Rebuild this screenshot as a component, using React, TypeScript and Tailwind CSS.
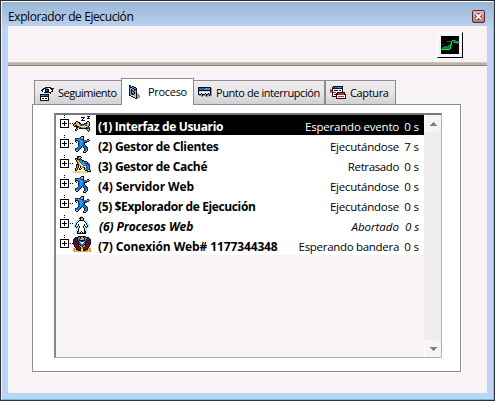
import React from "react";

const palette: Record<string, string> = {
  k: "#111018",
  b: "#0a6cc4",
  l: "#2a9af0",
  n: "#0a3a74",
  s: "#e3a16c",
  y: "#ffdf6b",
  o: "#e8961c",
  w: "#ffffff",
  c: "#a9e7ef",
  r: "#e01832",
  m: "#6b1022",
  g: "#92929b",
  d: "#4a4b55",
  e: "#c4d1e0",
};

function Pixels({ rows, className = "" }: { rows: string[]; className?: string }) {
  return (
    <svg className={`block shrink-0 ${className}`} width={rows[0].length} height={rows.length} shapeRendering="crispEdges" aria-hidden="true">
      {rows.flatMap((row, y) =>
        row.split("").map((p, x) => (p === "." ? null : <rect key={`${x}-${y}`} x={x} y={y} width="1" height="1" fill={palette[p]} />)),
      )}
    </svg>
  );
}

const sleeping = [
  "..............kkk.",
  "........kkkk...k..",
  "..........k...kkk.",
  ".........k........",
  "........kkkk......",
  "...kk.........kk..",
  "..ksskk......kssk.",
  ".kkysskk...kkksyk.",
  "ksooyylbkkkllbyok.",
  "kskkoyybblllbbook.",
  ".kkkkkoyyyyyyyok..",
  "...kkbbkoooookbbk.",
  "...ko.kkkkkkkkkbk.",
  "..kok........kyok.",
  "..kk..........kok.",
  "...............k..",
  "..................",
];
const running = [
  "........kkk.......",
  ".......nssk.......",
  "..nnnnnnssk.......",
  "..nllllbbkk...kk..",
  "..kkkblllbbbbbssk.",
  "..kssnblllbbbbkk..",
  "...k.nblllbkkk....",
  ".....nbllbbk......",
  ".....nbllbbk......",
  ".....nbllbbbk.....",
  ".....nblkbbbbk....",
  "....nblbk.kbbbk...",
  "..nnblbk...kblk...",
  "..nlbbk....nblk...",
  "..kssk.....nblk...",
  "...kk.....kssk....",
  "..........kkk.....",
];
const waiting = [
  "....kkkk..........",
  "....kkssk.........",
  "..kkkssk..........",
  "..kokkkbk.........",
  "...kooblbkk.......",
  "...koyblbbbkkk....",
  "....koyblllbbsk...",
  "....koyyblllbkkk..",
  "...kkkoyyblllbbbk.",
  "...kokooyybbbblbk.",
  "...kok.kooyyybblk.",
  "...kok.kyokk.nblk.",
  "..kok.kyk..kobblk.",
  "..kok.kk...koblbk.",
  "..kk........kkkssk",
  "yyyyyyyyyyyyyykkkk",
  "yyoyyyoyyyoyyyoyyy",
];
const aborted = [
  ".......ccc........",
  "......ckkkc.......",
  ".....ckksskc......",
  "......ckssk.......",
  "....cckkkkkcc.....",
  "...cckwwwwwkcc....",
  "..cckwwwwwwwkcc...",
  "..ckwwwwwwwwwkc...",
  ".cckwkwwwwwkwkcc..",
  ".ckwwkwwwwwkwwkc..",
  ".ckskckwwwkckskc..",
  ".cckcckwwwkcckcc..",
  "...cckwwwwwkcc....",
  "...cckwwwwwkcc....",
  "...cckwwwwwkcc....",
  "...ckkwwkwwkkc....",
  "...cksskckskkc....",
  "....kkkkkkkkk.....",
];
const waitingFlag = [
  ".....kkkkkkkk.....",
  "..kkkblkssklbkkk..",
  ".kmmkllkssskllkmk.",
  "kmmmklkssssklkmmmk",
  "kmkmkbkkkkkkbkmkmk",
  "kmmkmkblkkblkmkmmk",
  "kmmmkkbeewwbkkmmmk",
  "kmkmmkbbewbbkmmkmk",
  "kmmkmkkbbbbkkmkmmk",
  ".kmmmkokbbkokmmmk.",
  ".kmmkmkookookmmmk.",
  "..kmmmmkookmmmmk..",
  "oookmmmkookmmmkooo",
  "yookkkmkyykmkkkooy",
  "ooyookkkyykkkooyoo",
  "yooyooyooyooyooyoo",
];

const watchIcon = [
  ".....kkkkkk...",
  "...kkkggwwkkkk",
  "..kkwkkkkwwkk.",
  ".kkwwkddkwwwk.",
  "..kwwkkkkwwkk.",
  "....kkkkkkk...",
  "..........k...",
  "kkkkkkkkk.....",
  "klllbbbbk.....",
  "kkkkkkkkk.....",
  "kwwwwwwwk.....",
  "kwkkwkkwk.....",
  "kwwwwwwwk.....",
  "kkkkkkkkk.....",
];
const processIcon = [
  "kk...........",
  "kllkk........",
  "kkkllkk......",
  "kgekkllk.....",
  "kgkegkkk.....",
  "kgkkgkgk.....",
  "kgklkggk.....",
  "kgkllkgk.....",
  "kgkklkgkg....",
  "kggkkgekgg...",
  "kkeeegekggg..",
  "..kkeeekggg..",
  "....kkekggg..",
  "......kkg....",
];
const breakIcon = [
  "kkkkkkkkkkkkk.",
  "kbbbbbblllllkg",
  "kbbbbbblllllkg",
  "kkkkkkkkkkkkkg",
  "keeeeeeeeeeekg",
  "kwwwwwwwwwwwkg",
  "keekeeekeekekg",
  "kkkgkkkgkkgkkg",
  ".gggkgggkggkgg",
  "...gg..ggg.g..",
];
const captureIcon = [
  "...kkkkkkkkkk...",
  "..kbbbblllllk...",
  "..kkkkkkkkkkk...",
  "r.kwwwwwwwwwk...",
  "rrkwkkkkwkkwk...",
  "rrkwwwwwwwwwk...",
  "r.krrrwkkkkkkkk.",
  "..kwwwkkrrrrrrk.",
  "..kwkkkkrrrrrrkk",
  "..kwwwkwwwwwwwwk",
  "..kkkkkwrrrrrrwk",
  "......kwwwwwwwwk",
  "......kkkkkkkkkk",
];

function Expander() {
  return (
    <svg width="17" height="20" className="block shrink-0" shapeRendering="crispEdges" aria-hidden="true">
      <path fill="black" d="M8 0h1v1h-1zM8 2h1v1h-1zM14 8h1v1h-1zM16 8h1v1h-1z" />
      <path fill="black" d="M4 4h9v9H4z" />
      <path fill="white" d="M5 5h7v7H5z" />
      <path fill="black" d="M6 8h5v1H6zM8 6h1v5H8z" />
    </svg>
  );
}

interface Process {
  name: string;
  state: string;
  seconds: number;
  icon: string[];
  tracking: string;
  stateTracking: string;
  selected?: boolean;
  italic?: boolean;
}

const processes: Process[] = [
  { name: "(1) Interfaz de Usuario", state: "Esperando evento", seconds: 0, icon: sleeping, tracking: "tracking-[-0.35px]", stateTracking: "tracking-[-0.2px]", selected: true },
  { name: "(2) Gestor de Clientes", state: "Ejecutándose", seconds: 7, icon: running, tracking: "tracking-[-0.3px]", stateTracking: "tracking-[-0.22px]" },
  { name: "(3) Gestor de Caché", state: "Retrasado", seconds: 0, icon: waiting, tracking: "tracking-[-0.3px]", stateTracking: "tracking-[-0.38px]" },
  { name: "(4) Servidor Web", state: "Ejecutándose", seconds: 0, icon: running, tracking: "tracking-[-0.1px]", stateTracking: "tracking-[-0.22px]" },
  { name: "(5) $Explorador de Ejecución", state: "Ejecutándose", seconds: 0, icon: running, tracking: "tracking-[-0.38px]", stateTracking: "tracking-[-0.22px]" },
  { name: "(6) Procesos Web", state: "Abortado", seconds: 0, icon: aborted, tracking: "tracking-[-0.1px]", stateTracking: "tracking-[0px]", italic: true },
  { name: "(7) Conexión Web# 1177344348", state: "Esperando bandera", seconds: 0, icon: waitingFlag, tracking: "tracking-[-0.12px]", stateTracking: "tracking-[-0.3px]" },
];

function ProcessRow({ item }: { item: Process }) {
  return (
    <div className={`flex h-[20px] bg-white ${item.italic ? "italic" : ""}`}>
      <div className="flex w-[40px] shrink-0">
        <Expander />
        <Pixels rows={item.icon} className="mt-px" />
      </div>
      <div className={`flex min-w-0 grow items-center pr-[5px] pl-[2px] whitespace-nowrap ${item.selected ? "bg-black text-white" : ""}`}>
        <span className={`pt-[3px] font-bold ${item.italic ? "pl-px" : ""} ${item.tracking}`}>{item.name}</span>
        <span className={`ml-auto pt-[3px] text-[11.5px] ${item.stateTracking}`}>{item.state}</span>
        <span className="w-[20px] pt-[3px] text-right text-[11.5px] tracking-[-0.1px]">{item.seconds} s</span>
      </div>
    </div>
  );
}

function ScrollButton({ down = false }: { down?: boolean }) {
  return (
    <div className="flex h-[17px] items-center justify-center border-l border-white bg-[#f7f3f7]">
      <svg width="7" height="4" shapeRendering="crispEdges" aria-hidden="true"><path d={down ? "M0 0h7v1H6v1H5v1H4v1H3V3H2V2H1V1H0z" : "M3 0h1v1h1v1h1v1h1v1H0V3h1V2h1V1h1z"} fill="#7e7e83" /></svg>
    </div>
  );
}

export default function App() {
  return (
    <div className="flex h-[401px] w-[495px] flex-col border border-[#303036] border-t-[#29292d] bg-[#bdd3ef] font-['Open_Sans','Noto_Sans',sans-serif] text-[12px] leading-[16px] text-black">
      <div className="flex grow flex-col border-t border-r border-b border-l border-t-white border-r-[#62cfe9] border-b-[#52c4df] border-l-[#edf4fc]">
        <header className="flex h-[24px] shrink-0 justify-between bg-gradient-to-b from-[#9ab5d5] to-[#b9d1ed] pr-[8px] pl-[6px]">
          <h1 className="pt-[7px] text-[12px] font-normal tracking-[-0.41px]">Explorador de Ejecución</h1>
          <button aria-label="Cerrar" className="mt-[8px] flex size-[13px] items-center justify-center rounded-[2px] border border-[#60232d] bg-gradient-to-b from-[#e9b3ac] to-[#c7776e]">
            <svg width="9" height="9" viewBox="0 0 9 9" className="shrink-0"><path d="M2 2l5 5M7 2L2 7" stroke="#3c4250" strokeWidth="3.8" /><path d="M2 2l5 5M7 2L2 7" stroke="white" strokeWidth="1.9" /></svg>
          </button>
        </header>

        <main className="mr-[6px] mb-[6px] ml-[6px] flex grow flex-col bg-[#f7f3f7]">
          <div className="flex h-[36px] shrink-0 justify-end pt-[6px] pr-[24px]">
            <button aria-label="Monitor" className="flex size-[26px] items-center justify-center border border-t-white border-r-black border-b-black border-l-white bg-[#f7f3f7]">
              <svg width="18" height="18" viewBox="0 0 18 18" shapeRendering="crispEdges">
                <path fill="black" d="M0 0h18v18H0z" />
                <path fill="#087c34" d="M1 13v-2h2v-1h4V9h2V7h2v3H9v3z" />
                <path fill="#0b7436" d="M1 8h1v1H1zM6 5h5v1H6zM9 7h2v1H9z" />
                <path fill="none" stroke="#15e945" d="M0 13.5h9M9.5 13V9M10.5 9V6M10 5.5h1M11 4.5h2M13 5.5h1M14 6.5h2M16 7.5h1M17 6.5h1" />
                <path stroke="#0d963a" d="M3 11.5h3M12 6.5h2M13 4.5h2M15 5.5h3" />
              </svg>
            </button>
          </div>
          <div className="h-[4px] shrink-0 border-t border-b border-t-[#cac6b9] border-b-[#85827a] bg-[#bdb6a5]" />

          <nav className="mt-[12px] ml-[26px] flex h-[26px] shrink-0 items-end">
            <div className="flex h-[24px] w-[87px] items-center border-t border-l border-[#8c8b90] bg-gradient-to-b from-[#efedef] via-[#e9e7e9] via-45% to-[#d1d0d3] pl-[5px]">
              <Pixels rows={watchIcon} className="mt-[3px]" />
              <span className="mt-px ml-[4px] text-[11px] tracking-[-0.5px]">Seguimiento</span>
            </div>
            <div className="relative z-10 -mb-px flex h-[27px] w-[73px] items-center border-t border-r border-l border-[#8c8b90] bg-white pl-[7px]">
              <Pixels rows={processIcon} className="-mt-px" />
              <span className="ml-[6px] text-[11px] tracking-[-0.3px]">Proceso</span>
            </div>
            <div className="flex h-[24px] w-[132px] items-center border-t border-r-2 border-[#8c8b90] bg-gradient-to-b from-[#efedef] via-[#e9e7e9] via-45% to-[#d1d0d3] pl-[4px]">
              <Pixels rows={breakIcon} className="-mt-px" />
              <span className="mt-px ml-[4px] text-[11px] tracking-[-0.43px] whitespace-nowrap">Punto de interrupción</span>
            </div>
            <div className="flex h-[24px] w-[70px] items-center border-t border-r border-[#8c8b90] bg-gradient-to-b from-[#efedef] via-[#e9e7e9] via-45% to-[#d1d0d3] pl-[4px]">
              <Pixels rows={captureIcon} />
              <span className="mt-px ml-[4px] text-[11px] tracking-[-0.35px]">Captura</span>
            </div>
          </nav>

          <section className="ml-[24px] h-[268px] w-[429px] shrink-0 border border-[#8c8b90] bg-white pt-[8px] pl-[21px] shadow-[1px_1px_0_white]">
            <div className="flex h-[245px] w-[388px] border-t-2 border-r border-b border-l-2 border-t-[#77777a] border-r-[#aeb0ba] border-b-[#aeb0ba] border-l-[#858589] bg-[#f7f3f7]">
              <div className="w-[368px] shrink-0">
                {processes.map((item) => <ProcessRow key={item.name} item={item} />)}
              </div>
              <div className="flex grow flex-col justify-between bg-[#efedef]">
                <ScrollButton />
                <ScrollButton down />
              </div>
            </div>
          </section>
        </main>
      </div>
    </div>
  );
}
